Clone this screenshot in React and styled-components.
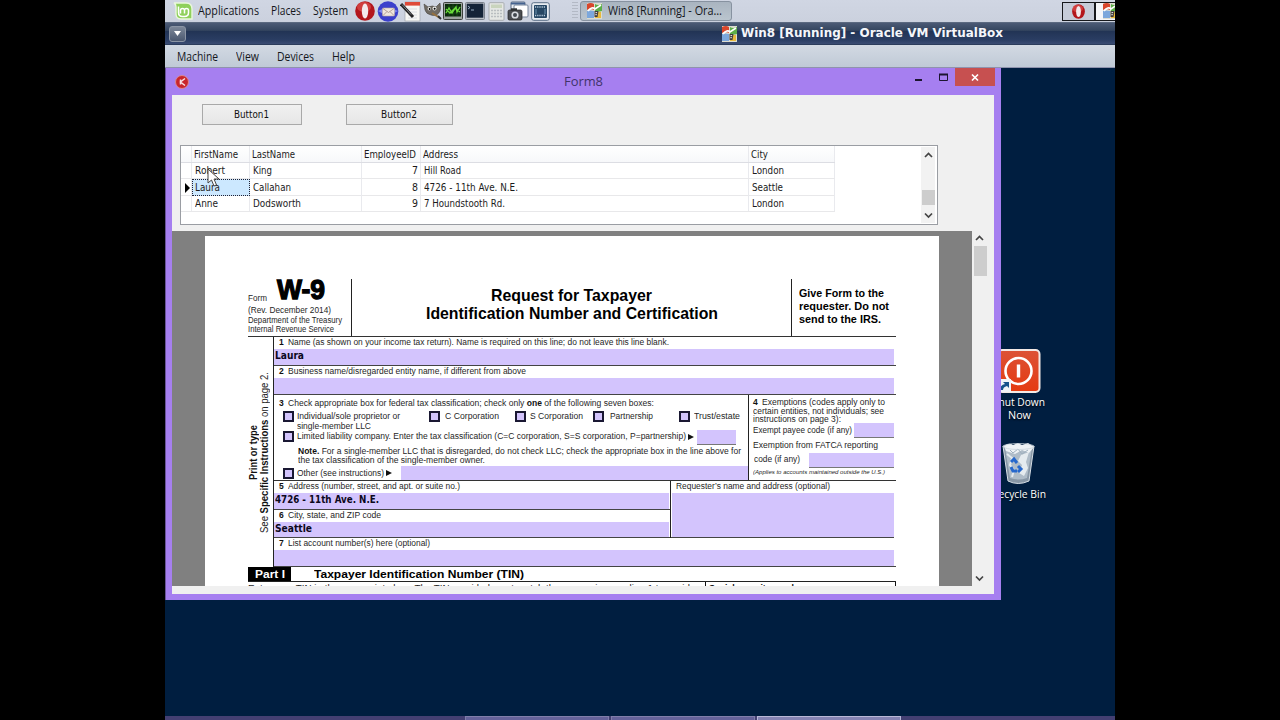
import React, { useLayoutEffect, useRef, useState } from "react";
import styled, { createGlobalStyle, css } from 'styled-components';

// styles
const GlobalStyle = createGlobalStyle`
	* { box-sizing: border-box; }

	body {
		margin: 0;
		background: #000;
		overflow: hidden;
	}
`;

const tahoma = '"DejaVu Sans", sans-serif';
const ubuntu = '"Open Sans", "Noto Sans", sans-serif';
const helvetica = '"Liberation Sans", Arial, sans-serif';
const segoe = '"Open Sans", sans-serif';

const Screen = styled.div`
	width: 1280px;
	height: 720px;
	display: flex;
	justify-content: center;
	background: #000;
`;

const Host = styled.div`
	width: 950px;
	height: 720px;
	display: flex;
	flex-direction: column;
	overflow: hidden;
`;

// Text squeezed or stretched to a given length
const FitBox = styled.span`
	display: block;
	flex: none;
	white-space: pre;
	${({ $w, $vertical }) => $vertical ? css`
		height: ${$w}px;
		writing-mode: vertical-rl;
		transform: rotate(180deg);
	` : css`
		width: ${$w}px;
	`}
`;

const FitInner = styled.span`
	display: inline-block;
	transform-origin: 0 0;
`;

const Fit = ({ w, vertical, children }) => {
	const ref = useRef(null);
	const [scale, setScale] = useState(1);

	useLayoutEffect(() => {
		const style = window.getComputedStyle(ref.current);
		const size = parseFloat(vertical ? style.height : style.width);
		setScale(w / size);
	}, [w, vertical]);

	return (
		<FitBox $w={w} $vertical={vertical}>
			<FitInner ref={ref} style={{ transform: vertical ? `scaleY(${scale})` : `scaleX(${scale})` }}>
				{children}
			</FitInner>
		</FitBox>
	);
};

// Host panel
const Panel = styled.div`
	height: 22px;
	flex: none;
	display: flex;
	align-items: center;
	padding-left: 8px;
	background: linear-gradient(#d0d6e3, #cbd1de);
	font: 500 12.5px/20px ${ubuntu};
	color: #15171c;
`;

const PanelMenu = styled.div`
	display: flex;
	flex: none;
	gap: 12px;
	margin-left: 5px;
	width: 157px;
`;

const Launchers = styled.div`
	display: flex;
	flex: none;
	align-items: center;
	gap: 1.6px;
	width: 217px;
`;

const Grip = styled.div`
	width: 6px;
	height: 18px;
	background: repeating-linear-gradient(#b3b9c5 0 1px, transparent 1px 3px);
`;

const TaskButton = styled.div`
	display: flex;
	align-items: center;
	gap: 6px;
	width: 152px;
	height: 20px;
	margin-left: 2px;
	padding-left: 6px;
	border: 1px solid #8792a0;
	border-radius: 3px;
	background: linear-gradient(#a9b4c0, #bac5ce);
`;

const Pager = styled.div`
	display: flex;
	align-items: center;
	justify-content: ${props => props.$end ? 'flex-start' : 'center'};
	flex: none;
	width: 33px;
	height: 19px;
	padding-left: ${props => props.$end ? '7px' : 0};
	margin-left: ${props => props.$end ? 0 : 'auto'};
	margin-right: ${props => props.$end ? '-13px' : 0};
	border: 1px solid #16181c;
	background: ${props => props.$end ? '#f4f6f9' : '#c6ccd9'};
`;

const HostTitle = styled.div`
	height: 23px;
	flex: none;
	display: flex;
	align-items: center;
	gap: 5px;
	padding-left: 4px;
	border-top: 1px solid #5b6980;
	border-bottom: 1px solid #2b3c5c;
	background: linear-gradient(#4b5a75 0%, #34455f 35%, #223455 40%, #2a3d63 80%, #3a4c73 100%);
	font: bold 12.5px/18px "DejaVu Sans", sans-serif;
	color: #f4f6fa;

	> :last-child {
		margin: -2px 0 0 -1px;
	}
`;

const MenuToggle = styled.div`
	display: flex;
	align-items: center;
	justify-content: center;
	width: 17px;
	height: 16px;
	margin-right: 531px;
	border: 1px solid #8b95a5;
	border-radius: 3px;
	background: linear-gradient(#7c8798, #4b5870);
`;

const MenuBar = styled.div`
	height: 23px;
	flex: none;
	display: flex;
	align-items: center;
	padding-left: 12px;
	gap: 18px;
	background: linear-gradient(#d2d9e3, #c0cad6);
	border-bottom: 1px solid #8f93ad;
	font: 500 12.5px/21px ${ubuntu};
	color: #15171c;
`;

// Guest desktop
const Guest = styled.div`
	position: relative;
	flex: 1;
	display: flex;
	flex-direction: column;
	justify-content: flex-end;
	background: #001e40;
`;

const Taskbar = styled.div`
	height: 4px;
	flex: none;
	display: flex;
	gap: 2px;
	padding-left: 300px;
	background: #433f72;
`;

const TaskItem = styled.div`
	width: 144px;
	border: 1px solid ${props => props.$active ? '#b9b8d8' : '#807eaa'};
	border-bottom: 0;
	background: ${props => props.$active ? '#8583b3' : '#65629a'};
`;

const Shortcut = styled.div`
	position: absolute;
	left: ${props => props.$x}px;
	top: ${props => props.$y}px;
	width: 60px;
	display: flex;
	flex-direction: column;
	align-items: center;
	font: 11px/13px ${segoe};
	color: #fff;
	text-shadow: 0 1px 2px #000;

	svg {
		margin-bottom: ${props => props.$gap}px;
	}
`;

const Window = styled.div`
	position: absolute;
	left: 0;
	top: 0;
	width: 836px;
	height: 532px;
	display: flex;
	flex-direction: column;
	padding: 0 7px 6px 6px;
	border-left: 1px solid #6a5499;
	background: #a67ff0;
`;

const Caption = styled.div`
	display: flex;
	height: 27px;
	flex: none;
	padding-left: 3px;
	font: 13px/27px ${segoe};
	color: #41336a;

	> :nth-child(2) {
		margin-left: 375px;
	}
`;

const CaptionIcon = styled.svg`
	margin-top: 7px;
	flex: none;
`;

const WindowButtons = styled.svg`
	margin-left: 311px;
	flex: none;
`;

const Client = styled.div`
	flex: 1;
	min-height: 0;
	display: flex;
	flex-direction: column;
	background: #f0f0f0;
`;

const Toolbar = styled.div`
	display: flex;
	gap: 44px;
	padding: 9px 0 0 30px;
	height: 50px;
	flex: none;
`;

const Button = styled.div`
	display: flex;
	align-items: center;
	justify-content: center;
	width: ${props => props.$w}px;
	height: 21px;
	padding-right: 2px;
	border: 1px solid #a9a9a9;
	background: linear-gradient(#f1f1f1, #e6e6e6);
	font: 10px/18px ${tahoma};
	color: #111;
`;

const GridBox = styled.div`
	display: flex;
	justify-content: space-between;
	flex: none;
	width: 758px;
	height: 80px;
	margin-left: 8px;
	border: 1px solid #9a9da3;
	background: #fff;
`;

const Table = styled.div`
	display: flex;
	flex-direction: column;
	font: 10px/14px ${tahoma};
	color: #1b1b1b;
`;

const TableRow = styled.div`
	display: grid;
	grid-template-columns: 11px 58px 112px 59px 328px 86px;
	height: ${props => props.$h}px;
	border-bottom: 1px solid ${props => props.$head ? '#dcdde3' : '#e8e8ea'};
	background: ${props => props.$head ? 'linear-gradient(#fff, #f7f8fa)' : '#fff'};
`;

const Cell = styled.div`
	display: flex;
	align-items: center;
	justify-content: ${props => props.$right ? 'flex-end' : 'flex-start'};
	padding: ${props => props.$head ? '1px 4px 0 2px' : '1px 2px 0 3px'};
	border-right: 1px solid #e9eaee;

	${props => props.$marker && css`
		padding: 0 0 0 3px;
	`}

	${props => props.$focus && css`
		padding: 1px 0 0 2px;
		border: 1px dotted #223;
		background: #cce8ff;
	`}
`;

const GridScroll = styled.div`
	display: flex;
	flex-direction: column;
	align-items: center;
	justify-content: space-between;
	width: 14px;
	margin: 1px 2px 1px 0;
	padding: 5px 0 4px;
	background: #f2f2f2;
`;

const GridThumb = styled.div`
	width: 13px;
	height: 15px;
	margin-top: 24px;
	background: #cdcdcd;
`;

const Viewer = styled.div`
	display: flex;
	flex: none;
	height: 355px;
	margin-top: 6px;
`;

const PageArea = styled.div`
	width: 800px;
	padding: 5px 33px 0;
	background: #808080;
`;

const ViewerScroll = styled.div`
	display: flex;
	flex-direction: column;
	align-items: center;
	width: 15px;
	padding: 4px 0;
	background: #f0f0f0;
`;

const ViewerThumb = styled.div`
	width: 13px;
	height: 30px;
	margin: 4px 0 auto 1px;
	background: #cdcdcd;
`;

const Page = styled.div`
	height: 350px;
	width: 734px;
	padding: 43px 0 0 43px;
	overflow: hidden;
	background: #fff;
	font: 8.5px/9px ${helvetica};
	color: #262626;

	b { color: #111; }
`;

// W-9 sheet
const Head = styled.div`
	display: flex;
	width: 648px;
	height: 58px;
	border-bottom: 1px solid #333;
`;

const HeadLeft = styled.div`
	width: 104px;
	height: 57px;
	border-right: 1px solid #222;
`;

const FormName = styled.div`
	display: flex;
	align-items: flex-end;
	gap: 10px;
	height: 24px;
	margin-bottom: 2px;

	b {
		font-size: 28px;
		line-height: 26px;
		color: #000;
		-webkit-text-stroke: 1.3px #000;
	}
`;

const HeadTitle = styled.div`
	display: flex;
	flex-direction: column;
	align-items: center;
	width: 440px;
	padding-top: 7px;
	border-right: 1px solid #222;
	font: bold 16.5px/18px ${helvetica};
	color: #000;
`;

const HeadNote = styled.div`
	padding: 8px 0 0 7px;
	font: bold 11px/13px ${helvetica};
	color: #000;
`;

const Body = styled.div`
	display: flex;
	width: 648px;
	height: 230px;
`;

const Sidebar = styled.div`
	display: flex;
	align-items: flex-start;
	width: 26px;
	border-right: 1px solid #222;
	font-size: 10px;
	line-height: 11px;

	> :first-child {
		margin-top: 88px;
	}

	> :last-child {
		margin-top: 35px;
	}
`;

const Sections = styled.div`
	width: 622px;
`;

const Section = styled.div`
	height: ${props => props.$h}px;
	border-bottom: 1px solid #444;
`;

const Line = styled.div`
	display: flex;
	align-items: center;
	height: ${props => props.$h}px;
	padding-left: ${props => props.$pl || 0}px;
	padding-bottom: ${props => props.$pb || 0}px;
	${props => props.$size && `font-size: ${props.$size}px;`}
	${props => props.$italic && 'font-style: italic;'}
`;

const Num = styled.b`
	width: 9px;
	flex: none;
`;

const Field = styled.div`
	flex: none;
	width: ${props => props.$w}px;
	height: ${props => props.$h}px;
	margin-left: ${props => props.$ml || 0}px;
	padding-left: 1px;
	background: #d3c4fd;
	font: bold 11px/${props => props.$h - 2}px ${tahoma};
	color: #0c0820;
	${props => props.$line && css`
		box-shadow: 0 1px 0 #777;
	`}
`;

const Check = styled.i`
	flex: none;
	width: 11px;
	height: 11px;
	margin-left: ${props => props.$ml || 0}px;
	margin-right: ${props => props.$mr || 0}px;
	border: 2px solid #1a1833;
	background: #d3c4fd;
`;

const Split = styled.div`
	display: flex;
	height: ${props => props.$h}px;
	border-bottom: ${props => props.$line ? '1px solid #333' : 0};
`;

const Classification = styled.div`
	width: 475px;
	padding-top: 3px;
	border-right: 1px solid #222;
`;

const Exemptions = styled.div`
	padding: 3px 0 0 4px;
`;

const AddressCol = styled.div`
	width: 397px;
	border-right: 1px solid #222;
`;

const PartRow = styled.div`
	display: flex;
	align-items: center;
	width: 648px;
	height: 15px;
	border-bottom: 1px solid #222;
	font: bold 11.5px/14px ${helvetica};
	color: #000;
`;

const PartTag = styled.div`
	display: flex;
	justify-content: center;
	width: 43px;
	height: 14px;
	margin-right: 23px;
	background: #000;
	color: #fff;
`;

const Tail = styled.div`
	display: flex;
	width: 648px;
	justify-content: space-between;
	padding-top: 2px;
`;

const SocialBox = styled.div`
	width: 191px;
	height: 20px;
	margin-top: -2px;
	padding: 2px 0 0 3px;
	border: 1px solid #111;
	border-top: 0;
`;

const Pointer = styled.svg`
	position: absolute;
	left: 41px;
	top: 100px;
`;

const MintIcon = () => (
	<svg width="20" height="18" viewBox="0 0 20 18">
		<path d="M1 1h12q6 0 6 6v10H8q-5 0-5-5V5Q3 2 1 1z" fill="#8fd05c" stroke="#e9f7dc" strokeWidth="1.4" />
		<path d="M6 4v6q0 4 4 4h2q4 0 4-4V8q0-2-2-2t-2 2v3M12 8q0-2-2-2T8 8v3" transform="translate(-.5 .4)" fill="none" stroke="#fff" strokeWidth="1.5" />
	</svg>
);

const OperaIcon = ({ size, ring }) => (
	<svg width={size} height={size} viewBox="0 0 20 20">
		<ellipse cx="10" cy="10" rx={ring ? 9.8 : 8.5} ry="9.8" fill="#b3161c" />
		<ellipse cx="9" cy="6" rx="7" ry="5" fill="#e35a55" opacity=".6" />
		<ellipse cx="10" cy="10" rx="3.2" ry="7.4" fill="#f3e9ec" />
	</svg>
);

const MailIcon = () => (
	<svg width="22" height="21" viewBox="0 0 22 21">
		<circle cx="11" cy="10.5" r="10.3" fill="#3b40cc" />
		<path d="M1 10q10-6 20 0-10 7-20 0z" fill="#7b86ee" />
		<rect x="5.5" y="7" width="12" height="8" rx="1" fill="#efe6dc" stroke="#b7a7a0" strokeWidth=".6" />
		<path d="M6 7.5l5.500 4 5.500-4M6 14.500l4-4m7 4l-4-4" fill="none" stroke="#a58e88" strokeWidth=".8" />
	</svg>
);

const NoteIcon = () => (
	<svg width="21" height="21" viewBox="0 0 21 21">
		<rect x="5" y="1" width="15" height="19" fill="#f7f7f4" stroke="#9fa4ad" strokeWidth=".7" />
		<rect x="5" y="1" width="15" height="3.6" fill="#df4a38" />
		<path d="M8 8h9M8 11h9M8 14h9M8 17h9" stroke="#d3d7de" strokeWidth=".8" />
		<path d="M1 3l12 13" stroke="#222" strokeWidth="3" />
		<path d="M2 3.500l9 10" stroke="#969ba5" strokeWidth=".8" />
	</svg>
);

const GimpIcon = () => (
	<svg width="19" height="18" viewBox="0 0 19 18">
		<path d="M1 2l4 3q5-2 8 0l4-4q1 5 0 8-3 6-9 4-5-1-6-5z" fill="#6f6a63" stroke="#4a4641" strokeWidth=".6" />
		<circle cx="6.3" cy="6.8" r="1.7" fill="#eee" />
		<circle cx="11.5" cy="6.5" r="2" fill="#eee" />
		<circle cx="6.6" cy="7" r=".9" />
		<circle cx="11.6" cy="6.8" r="1" />
		<path d="M9 11l8 5" stroke="#96713e" strokeWidth="2" />
		<path d="M15 14l3 3" stroke="#333" strokeWidth="2" />
	</svg>
);

const MonitorIcon = () => (
	<svg width="20" height="18" viewBox="0 0 20 18">
		<rect x=".5" y=".5" width="19" height="17" rx="1" fill="#9ca39f" stroke="#3d413e" />
		<rect x="2" y="2" width="16" height="12.5" fill="#0b2a0c" />
		<path d="M2 5h16M2 8h16M2 11h16M6 2v12M10 2v12M14 2v12" stroke="#1f5a1d" strokeWidth=".6" />
		<path d="M3 11l3-5 3 5 4-6 1 5 3-5M3 7l4 4 5-5 5 4" fill="none" stroke="#69db3a" strokeWidth="1.3" />
	</svg>
);

const TerminalIcon = () => (
	<svg width="20" height="18" viewBox="0 0 20 18">
		<rect x=".5" y=".5" width="19" height="17" rx="1" fill="#b9bec6" stroke="#7b828d" />
		<rect x="1.7" y="1.7" width="16.6" height="14" fill="#142338" />
		<path d="M3 4l2 1.500L3 7m3 1h3" fill="none" stroke="#a7bcd4" strokeWidth=".9" />
	</svg>
);

const CalcIcon = () => (
	<svg width="19" height="19" viewBox="0 0 19 19">
		<rect x="2" y=".7" width="15" height="17.600" rx="1" fill="#e5e7e4" stroke="#a9adb0" />
		<rect x="4" y="2.5" width="11" height="3.5" fill="#c9d4bd" />
		<path d="M4 8.500h11M4 11.500h11M4 14.500h11" stroke="#b9bec0" strokeWidth="1.7" strokeDasharray="2.1 .9" />
	</svg>
);

const CameraIcon = () => (
	<svg width="22" height="20" viewBox="0 0 22 20">
		<rect x="4" y="1" width="14" height="11" rx="1" fill="#eceff3" stroke="#5c6c85" />
		<rect x="7" y="4" width="14" height="12" rx="1" fill="#fff" stroke="#74839a" />
		<path d="M4 2.500h14" stroke="#44628f" strokeWidth="2" />
		<rect x="1" y="9" width="14" height="10" rx="1.5" fill="#4b4e52" stroke="#222" strokeWidth=".7" />
		<rect x="4" y="7.3" width="6" height="2.5" fill="#303336" />
		<circle cx="8" cy="14" r="3.6" fill="#d9dde2" />
		<circle cx="8" cy="14" r="2" fill="#43494f" />
	</svg>
);

const DisplayIcon = () => (
	<svg width="19" height="19" viewBox="0 0 19 19">
		<rect x=".7" y=".7" width="17.6" height="17.6" rx="2" fill="#e7ecf1" stroke="#5b6f86" />
		<rect x="3" y="3" width="13" height="13" rx="1" fill="#264764" />
		<path d="M4 5h11M4 13.500h11" stroke="#bcd0e0" strokeDasharray="1.2 1" strokeWidth="1.4" />
		<path d="M5 7v5M14 7v5" stroke="#6287a3" strokeWidth="1.2" />
	</svg>
);

const VmLogo = styled.svg`
	flex: none;
`;

const VmIcon = () => (
	<VmLogo width="15" height="16" viewBox="0 0 15 16">
		<rect width="15" height="16" fill="#dcdccf" />
		<path d="M0 1q4-2 7 0v6Q3 5 0 7z" fill="#d8462c" />
		<path d="M8 1q3 2 7 0v7q-4 1-7 0z" fill="#5cae48" />
		<path d="M0 8q3-1 7 0v7H0z" fill="#7ba7dc" />
		<path d="M8 9h6v6H8z" fill="#e7b93d" />
		<path d="M1 8q4-5 7-2l6-4" fill="none" stroke="#fff" strokeWidth="1.6" />
		<path d="M7.500 8h4l-1 6h-3z" fill="#403c3b" />
		<path d="M8.500 9.600h1.600M8.300 11.700h1.600" stroke="#eee" />
	</VmLogo>
);

const ShutdownIcon = () => (
	<svg width="46" height="44" viewBox="0 0 46 44">
		<defs>
			<linearGradient id="power" x2="0" y2="1">
				<stop offset="0" stopColor="#dc5236" />
				<stop offset="1" stopColor="#e53a10" />
			</linearGradient>
		</defs>
		<rect x="2" y="1" width="41.5" height="42" rx="4" fill="url(#power)" stroke="#f4e9e5" strokeWidth="2" />
		<circle cx="22.5" cy="22" r="13" fill="none" stroke="#fff" strokeWidth="2.6" />
		<path d="M22.500 15.500v13" stroke="#fff" strokeWidth="3.4" />
		<rect x="2" y="30" width="13" height="13" fill="#f1f4f8" />
		<path d="M4 41q0-5 5-6l-2-2h6v6l-2-2q-4 1-4 4z" fill="#17528c" />
	</svg>
);

const BinIcon = () => (
	<svg width="36" height="44" viewBox="0 0 36 44">
		<path d="M2 4l5 35q10 5 21 0l5-35z" fill="#8796a5" stroke="#d5dde4" />
		<path d="M4 6l5 30q8 3 17 0l5-30z" fill="#b9c6d1" opacity=".8" />
		<path d="M3 4q5-4 9-1l5-2 4 2 6-2 6 4-5 6-7-3-7 4-9-3z" fill="#eef2f5" />
		<path d="M20 13l8-3-3 10 2 6-4 8-5-3 3-8-4-4z" fill="#eef3f6" opacity=".85" />
		<path d="M6 12l5 4-2 7 4 5-2 7" fill="none" stroke="#e4eaee" strokeWidth="2" />
		<path d="M9 8l3 3 5-4 4 5 6-4" fill="none" stroke="#9fb0be" />
		<ellipse cx="17.5" cy="4.5" rx="15.5" ry="3" fill="none" stroke="#c9d3da" strokeWidth=".8" />
		<path d="M10 20l3-3 3 4M10 25l2 4 4 0M17 24l3 3-3 3" fill="none" stroke="#2668cc" strokeWidth="3" />
	</svg>
);

const Chevron = ({ down }) => (
	<svg width="9" height="7" viewBox="0 0 9 7">
		<path d={down ? 'M1 1.5l3.5 3.5L8 1.5' : 'M1 5l3.5-3.5L8 5'} fill="none" stroke="#444" strokeWidth="1.7" />
	</svg>
);

const Arrow = () => (
	<svg width="9" height="8" viewBox="0 0 9 8">
		<path d="M2 1v6l6-3z" fill="#111" />
	</svg>
);

const columns = [
	{ name: 'FirstName', w: 44 },
	{ name: 'LastName', w: 43 },
	{ name: 'EmployeeID', w: 52 },
	{ name: 'Address', w: 35 },
	{ name: 'City', w: 17 },
];

const employees = [
	[['Robert', 30], ['King', 19], ['7', 6], ['Hill Road', 37], ['London', 32]],
	[['Laura', 25], ['Callahan', 38], ['8', 6], ['4726 - 11th Ave. N.E.', 94], ['Seattle', 31]],
	[['Anne', 23], ['Dodsworth', 48], ['9', 6], ['7 Houndstooth Rd.', 81], ['London', 32]],
];

const EmployeeGrid = () => (
	<GridBox>
		<Table>
			<TableRow $head $h={17}>
				<Cell $head />
				{columns.map((c, i) => (
					<Cell key={c.name} $head $right={i === 2}><Fit w={c.w}>{c.name}</Fit></Cell>
				))}
			</TableRow>
			{employees.map((row, n) => (
				<TableRow key={n} $h={n === 1 ? 17 : 16}>
					<Cell $marker>
						{n === 1 && (
							<svg width="7" height="10" viewBox="0 0 7 10"><path d="M1 0v10l5-5z" /></svg>
						)}
					</Cell>
					{row.map(([text, w], i) => (
						<Cell key={i} $right={i === 2} $focus={n === 1 && i === 0}>
							<Fit w={w}>{text}</Fit>
						</Cell>
					))}
				</TableRow>
			))}
		</Table>
		<GridScroll>
			<Chevron />
			<GridThumb />
			<Chevron down />
		</GridScroll>
	</GridBox>
);

const Label = ({ num, w, children }) => (
	<Line $h={12} $pl={5} $pb={2}>
		<Num>{num}</Num>
		<Fit w={w}>{children}</Fit>
	</Line>
);

const TaxForm = () => (
	<Page>
		<Head>
			<HeadLeft>
				<FormName>
					<Fit w={19}>Form</Fit>
					<b><Fit w={48}>W-9</Fit></b>
				</FormName>
				<Line $h={10}><Fit w={83}>(Rev. December 2014)</Fit></Line>
				<Line $h={10}><Fit w={94}>Department of the Treasury</Fit></Line>
				<Line $h={8}><Fit w={86}>Internal Revenue Service</Fit></Line>
			</HeadLeft>
			<HeadTitle>
				<Fit w={161}>Request for Taxpayer</Fit>
				<Fit w={292}>Identification Number and Certification</Fit>
			</HeadTitle>
			<HeadNote>
				<Fit w={85}>Give Form to the</Fit>
				<Fit w={90}>requester. Do not</Fit>
				<Fit w={82}>send to the IRS.</Fit>
			</HeadNote>
		</Head>
		<Body>
			<Sidebar>
				<b><Fit vertical w={55}>Print or type</Fit></b>
				<Fit vertical w={161}>See <b>Specific Instructions</b> on page 2.</Fit>
			</Sidebar>
			<Sections>
				<Section $h={29}>
					<Label num="1" w={381}>Name (as shown on your income tax return). Name is required on this line; do not leave this line blank.</Label>
					<Field $w={620} $h={16}><Fit w={29}>Laura</Fit></Field>
				</Section>
				<Section $h={29}>
					<Label num="2" w={238}>Business name/disregarded entity name, if different from above</Label>
					<Field $w={620} $h={16} />
				</Section>
				<Split $h={86} $line>
					<Classification>
						<Line $h={12} $pl={5} $pb={1}>
							<Num>3</Num>
							<Fit w={366}>Check appropriate box for federal tax classification; check only <b>one</b> of the following seven boxes:</Fit>
						</Line>
						<Line $h={13} $pl={9}>
							<Check $mr={3} /><Fit w={103}>Individual/sole proprietor or</Fit>
							<Check $ml={29} $mr={5} /><Fit w={54}>C Corporation</Fit>
							<Check $ml={16} $mr={4} /><Fit w={53}>S Corporation</Fit>
							<Check $ml={10} $mr={6} /><Fit w={43}>Partnership</Fit>
							<Check $ml={26} $mr={4} /><Fit w={46}>Trust/estate</Fit>
						</Line>
						<Line $h={6} $pl={23}><Fit w={74}>single-member LLC</Fit></Line>
						<Line $h={15} $pl={9}>
							<Check $mr={3} />
							<Fit w={389}>Limited liability company. Enter the tax classification (C=C corporation, S=S corporation, P=partnership)</Fit>
							<Arrow />
							<Field $w={39} $h={14} $ml={2} $line />
						</Line>
						<Line $h={14} $pl={24}>
							<Fit w={443}><b>Note.</b> For a single-member LLC that is disregarded, do not check LLC; check the appropriate box in the line above for</Fit>
						</Line>
						<Line $h={5} $pl={24} $pb={1}><Fit w={187}>the tax classification of the single-member owner.</Fit></Line>
						<Line $h={20} $pl={9}>
							<Check $mr={3} /><Fit w={87}>Other (see instructions)</Fit>
							<Arrow />
							<Field $w={347} $h={14} $ml={8} />
						</Line>
					</Classification>
					<Exemptions>
						<Line $h={9}><Num>4</Num><Fit w={123}>Exemptions (codes apply only to</Fit></Line>
						<Line $h={8}><Fit w={131}>certain entities, not individuals; see</Fit></Line>
						<Line $h={8}><Fit w={88}>instructions on page 3):</Fit></Line>
						<Line $h={14}><Fit w={99}>Exempt payee code (if any)</Fit><Field $w={40} $h={14} $ml={2} $line /></Line>
						<Line $h={17}><Fit w={125}>Exemption from FATCA reporting</Fit></Line>
						<Line $h={11} $pl={1}><Fit w={46}>code (if any)</Fit><Field $w={85} $h={14} $ml={9} $line /></Line>
						<Line $h={15} $size={6} $italic><Fit w={132}>(Applies to accounts maintained outside the U.S.)</Fit></Line>
					</Exemptions>
				</Split>
				<Split $h={57}>
					<AddressCol>
						<Section $h={29}>
							<Label num="5" w={172}>Address (number, street, and apt. or suite no.)</Label>
							<Field $w={395} $h={16}><Fit w={104}>4726 - 11th Ave. N.E.</Fit></Field>
						</Section>
						<Section $h={28}>
							<Label num="6" w={93}>City, state, and ZIP code</Label>
							<Field $w={395} $h={15}><Fit w={37}>Seattle</Fit></Field>
						</Section>
					</AddressCol>
					<Section $h={57}>
						<Line $h={12} $pl={5} $pb={2}><Fit w={154}>Requester’s name and address (optional)</Fit></Line>
						<Field $w={222} $h={44} $ml={1} />
					</Section>
				</Split>
				<Section $h={29}>
					<Label num="7" w={142}>List account number(s) here (optional)</Label>
					<Field $w={620} $h={16} />
				</Section>
			</Sections>
		</Body>
		<PartRow>
			<PartTag><Fit w={30}>Part I</Fit></PartTag>
			<Fit w={210}>Taxpayer Identification Number (TIN)</Fit>
		</PartRow>
		<Tail>
			<Fit w={442}>Enter your TIN in the appropriate box. The TIN provided must match the name given on line 1 to avoid</Fit>
			<SocialBox><b><Fit w={96}>Social security number</Fit></b></SocialBox>
		</Tail>
	</Page>
);

const App = () => (
	<Screen>
		<GlobalStyle />
		<Host>
			<Panel>
				<MintIcon />
				<PanelMenu>
					<Fit w={61}>Applications</Fit>
					<Fit w={30}>Places</Fit>
					<Fit w={35}>System</Fit>
				</PanelMenu>
				<Launchers>
					<OperaIcon size={20} ring />
					<MailIcon />
					<NoteIcon />
					<GimpIcon />
					<MonitorIcon />
					<TerminalIcon />
					<CalcIcon />
					<CameraIcon />
					<DisplayIcon />
				</Launchers>
				<Grip />
				<TaskButton>
					<VmIcon />
					<Fit w={114}>Win8 [Running] - Ora…</Fit>
				</TaskButton>
				<Pager><OperaIcon size={15} /></Pager>
				<Pager $end><VmIcon /></Pager>
			</Panel>
			<HostTitle>
				<MenuToggle>
					<svg width="7" height="6" viewBox="0 0 7 6"><path d="M0 0h7L3.500 5z" fill="#fff" /></svg>
				</MenuToggle>
				<VmIcon />
				<Fit w={262}>Win8 [Running] - Oracle VM VirtualBox</Fit>
			</HostTitle>
			<MenuBar>
				<Fit w={41}>Machine</Fit>
				<Fit w={23}>View</Fit>
				<Fit w={37}>Devices</Fit>
				<Fit w={23}>Help</Fit>
			</MenuBar>
			<Guest>
				<Taskbar>
					<TaskItem />
					<TaskItem />
					<TaskItem $active />
				</Taskbar>
				<Shortcut $x={824} $y={281} $gap={2}>
					<ShutdownIcon />
					<Fit w={52}>Shut Down</Fit>
					<Fit w={23}>Now</Fit>
				</Shortcut>
				<Shortcut $x={824} $y={374} $gap={1}>
					<BinIcon />
					<Fit w={54}>Recycle Bin</Fit>
				</Shortcut>
				<Window>
					<Caption>
						<CaptionIcon width="14" height="14" viewBox="0 0 14 14">
							<circle cx="7" cy="7" r="6.5" fill="#c9252b" stroke="#d98793" />
							<path d="M10 3.500L5.500 7l4.500 3.500M5.500 4.500v5" fill="none" stroke="#f6dfe2" strokeWidth="1.5" />
						</CaptionIcon>
						<Fit w={39}>Form8</Fit>
						<WindowButtons width="81" height="18" viewBox="0 0 81 18">
							<path d="M1 12h7" stroke="#1c1530" strokeWidth="2" />
							<path d="M25.500 6v6.500h8V6" fill="none" stroke="#1c1530" />
							<path d="M25 6.500h9" stroke="#1c1530" strokeWidth="2" />
							<path d="M41 0h40v18H41z" fill="#c75050" />
							<path d="M58 6.500l6 6m0-6l-6 6" stroke="#fff" strokeWidth="1.7" />
						</WindowButtons>
					</Caption>
					<Client>
						<Toolbar>
							<Button $w={100}><Fit w={35}>Button1</Fit></Button>
							<Button $w={107}><Fit w={36}>Button2</Fit></Button>
						</Toolbar>
						<EmployeeGrid />
						<Viewer>
							<PageArea><TaxForm /></PageArea>
							<ViewerScroll>
								<Chevron />
								<ViewerThumb />
								<Chevron down />
							</ViewerScroll>
						</Viewer>
					</Client>
					<Pointer width="13" height="20" viewBox="0 0 13 20">
						<path d="M1 1v14l3.500-3 2.500 6 2.500-1-2.500-6H12z" fill="#fff" stroke="#444" />
					</Pointer>
				</Window>
			</Guest>
		</Host>
	</Screen>
);

export default App;
